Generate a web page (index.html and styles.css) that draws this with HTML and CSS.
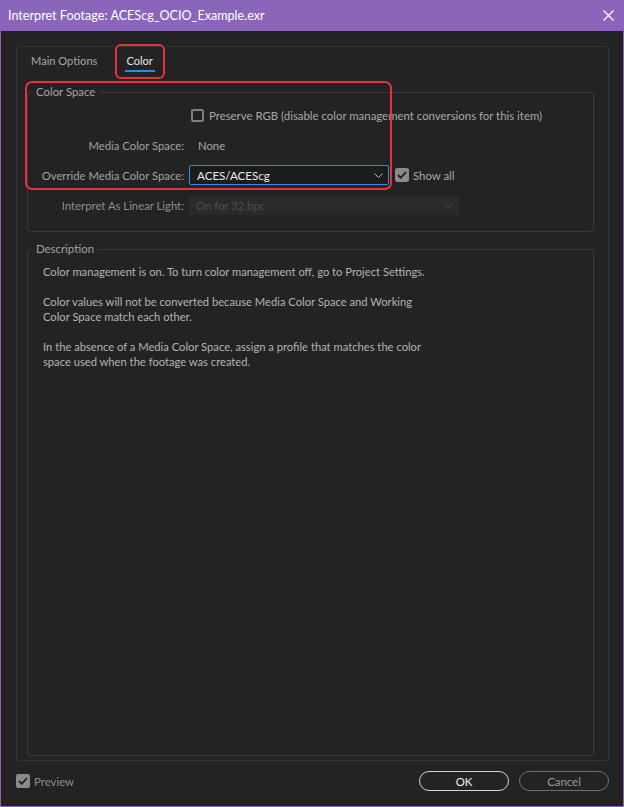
FILE: index.html
```html
<!DOCTYPE html>
<html lang="en">
<head>
  <meta charset="UTF-8">
  <title>Interpret Footage</title>
  <link rel="stylesheet" href="styles.css">
</head>
<body>
<div class="window">
  <div class="titlebar">
    <span class="title">Interpret Footage: ACEScg_OCIO_Example.exr</span>
    <svg class="close" width="11" height="11" viewBox="0 0 11 11"><path d="M0.5 0.5L10.5 10.5M10.5 0.5L0.5 10.5" stroke="#fff" stroke-width="1.2"/></svg>
  </div>

  <div class="panel">
    <div class="tabs">
      <span class="tab">Main Options</span>
      <span class="tab active">Color</span>
    </div>

    <fieldset class="group colorspace">
      <legend>Color Space</legend>
      <div class="rows">
        <span></span>
        <label class="check"><span class="box"></span>Preserve RGB (disable color management conversions for this item)</label>

        <span class="label">Media Color Space:</span>
        <span class="value">None</span>

        <span class="label">Override Media Color Space:</span>
        <div class="ctrl">
          <div class="select active">
            <span>ACES/ACEScg</span>
            <svg width="9" height="5" viewBox="0 0 9 5"><path d="M0.5 0.5L4.5 4.5L8.5 0.5" fill="none" stroke="#bdbdbd" stroke-width="1"/></svg>
          </div>
          <label class="check on"><span class="box"><svg width="10" height="8" viewBox="0 0 10 8"><path d="M1 4L3.8 6.8L9 1" fill="none" stroke="#1e1e1e" stroke-width="1.8"/></svg></span>Show all</label>
        </div>

        <span class="label dim">Interpret As Linear Light:</span>
        <div class="select disabled">
          <span>On for 32 bpc</span>
          <svg width="9" height="5" viewBox="0 0 9 5"><path d="M0.5 0.5L4.5 4.5L8.5 0.5" fill="none" stroke="#4a4a4a" stroke-width="1"/></svg>
        </div>
      </div>
    </fieldset>

    <fieldset class="group description">
      <legend>Description</legend>
      <div class="desc-text">
        <p>Color management is on. To turn color management off, go to Project Settings.</p>
        <p>Color values will not be converted because Media Color Space and Working<br>Color Space match each other.</p>
        <p>In the absence of a Media Color Space, assign a profile that matches the color<br>space used when the footage was created.</p>
      </div>
    </fieldset>
  </div>

  <div class="footer">
    <label class="check on preview"><span class="box"><svg width="10" height="8" viewBox="0 0 10 8"><path d="M1 4L3.8 6.8L9 1" fill="none" stroke="#1e1e1e" stroke-width="1.8"/></svg></span>Preview</label>
    <div class="buttons">
      <button class="btn primary">OK</button>
      <button class="btn">Cancel</button>
    </div>
  </div>

  <!-- annotation marks -->
  <div class="mark mark-tab"></div>
  <div class="mark mark-space"></div>
</div>
</body>
</html>
```

FILE: styles.css
```css
* {
  box-sizing: border-box;
}
body {
  margin: 0;
  background: #232323;
  font-family: Lato, "Noto Sans", sans-serif;
  font-size: 11.3px;
  color: #b0b0b0;
}
.window {
  position: relative;
  width: 624px;
  height: 807px;
  display: flex;
  flex-direction: column;
  background: #232323;
  border: 1px solid #8a65b9;
  border-top: none;
}
.titlebar {
  height: 31px;
  margin: 0 -1px;
  padding: 0 10px 0 8px;
  display: flex;
  align-items: center;
  justify-content: space-between;
  background: #8a65b9;
  color: #fff;
  font-size: 12.6px;
}

.panel {
  height: 715px;
  margin: 15px 14px 0 15px;
  padding-bottom: 4px;
  border: 1px solid #333;
  border-radius: 3px;
  display: flex;
  flex-direction: column;
}
.tabs {
  height: 37px;
  padding: 6px 0 0 14px;
  display: flex;
  gap: 28px;
  align-items: flex-start;
}
.tab {
  line-height: 16px;
  font-size: 11.1px;
  color: #a6a6a6;
  padding-bottom: 1px;
}
.tab.active {
  color: #e4e4e4;
  padding: 0 2px 1px 1px;
  border-bottom: 2px solid #2d8ceb;
}

.group {
  margin: 0 14px 0 10px;
  padding: 0;
  border: 1px solid #383838;
  border-radius: 3px;
  min-width: 0;
}
.group legend {
  margin-left: 4px;
  padding: 0 4px;
  line-height: 16px;
  font-size: 11.4px;
  color: #a4a4a4;
}
.colorspace {
  height: 148px;
}
.description {
  height: 515px;
  margin-top: 9px;
}
.desc-text {
  padding: 7px 15px 0;
}
.description p {
  margin: 0 0 15px;
  line-height: 15px;
  font-size: 11.2px;
  color: #b4b4b4;
}

.rows {
  display: grid;
  grid-template-columns: 156px 1fr;
  grid-auto-rows: 30px;
  column-gap: 5px;
  align-items: center;
}
.label {
  text-align: right;
  color: #a2a2a2;
  font-size: 11.3px;
}
.label.dim {
  color: #8e8e8e;
}
.value {
  padding-left: 9px;
  color: #a8a8a8;
  font-size: 11.3px;
}
.ctrl {
  display: flex;
  align-items: center;
  gap: 6px;
}

.check {
  display: flex;
  align-items: center;
  gap: 5px;
  color: #a8a8a8;
  font-size: 11.4px;
}
.rows > .check {
  margin-left: 2px;
}
.check .box {
  width: 13px;
  height: 13px;
  border: 2px solid #7e7e7e;
  border-radius: 2px;
  display: flex;
  align-items: center;
  justify-content: center;
}
.check.on .box {
  width: 14px;
  height: 14px;
  border: none;
  background: #8a8a8a;
}
.check.on {
  gap: 4px;
}

.select {
  height: 20px;
  padding: 0 5px 0 7px;
  display: flex;
  align-items: center;
  justify-content: space-between;
  border-radius: 2px;
}
.select.active {
  width: 200px;
  background: #1c1c1c;
  border: 1px solid #2d8ceb;
  color: #ececec;
  font-size: 11.6px;
}
.select.disabled {
  width: 270px;
  background: #2a2a2a;
  color: #4f4f4f;
  padding-right: 6px;
  font-size: 11.3px;
}

.footer {
  height: 40px;
  padding: 0 14px 0 15px;
  display: flex;
  align-items: center;
  justify-content: space-between;
}
.preview {
  color: #8c8c8c;
}
.preview .box {
  background: #7c7c7c;
}
.buttons {
  display: flex;
  gap: 10px;
}
.btn {
  width: 90px;
  height: 20px;
  padding: 0;
  border: 1px solid #6f6f6f;
  border-radius: 10px;
  background: transparent;
  font-family: inherit;
  font-size: 11.4px;
  color: #9c9c9c;
}
.btn.primary {
  border-color: #d4d4d4;
  color: #f2f2f2;
}

.mark {
  position: absolute;
  border: 2px solid #e6323b;
  pointer-events: none;
}
.mark-tab {
  left: 114px;
  top: 44px;
  width: 50px;
  height: 35px;
  border-radius: 6px;
}
.mark-space {
  left: 24px;
  top: 81px;
  width: 367px;
  height: 109px;
  border-radius: 7px;
}
```
